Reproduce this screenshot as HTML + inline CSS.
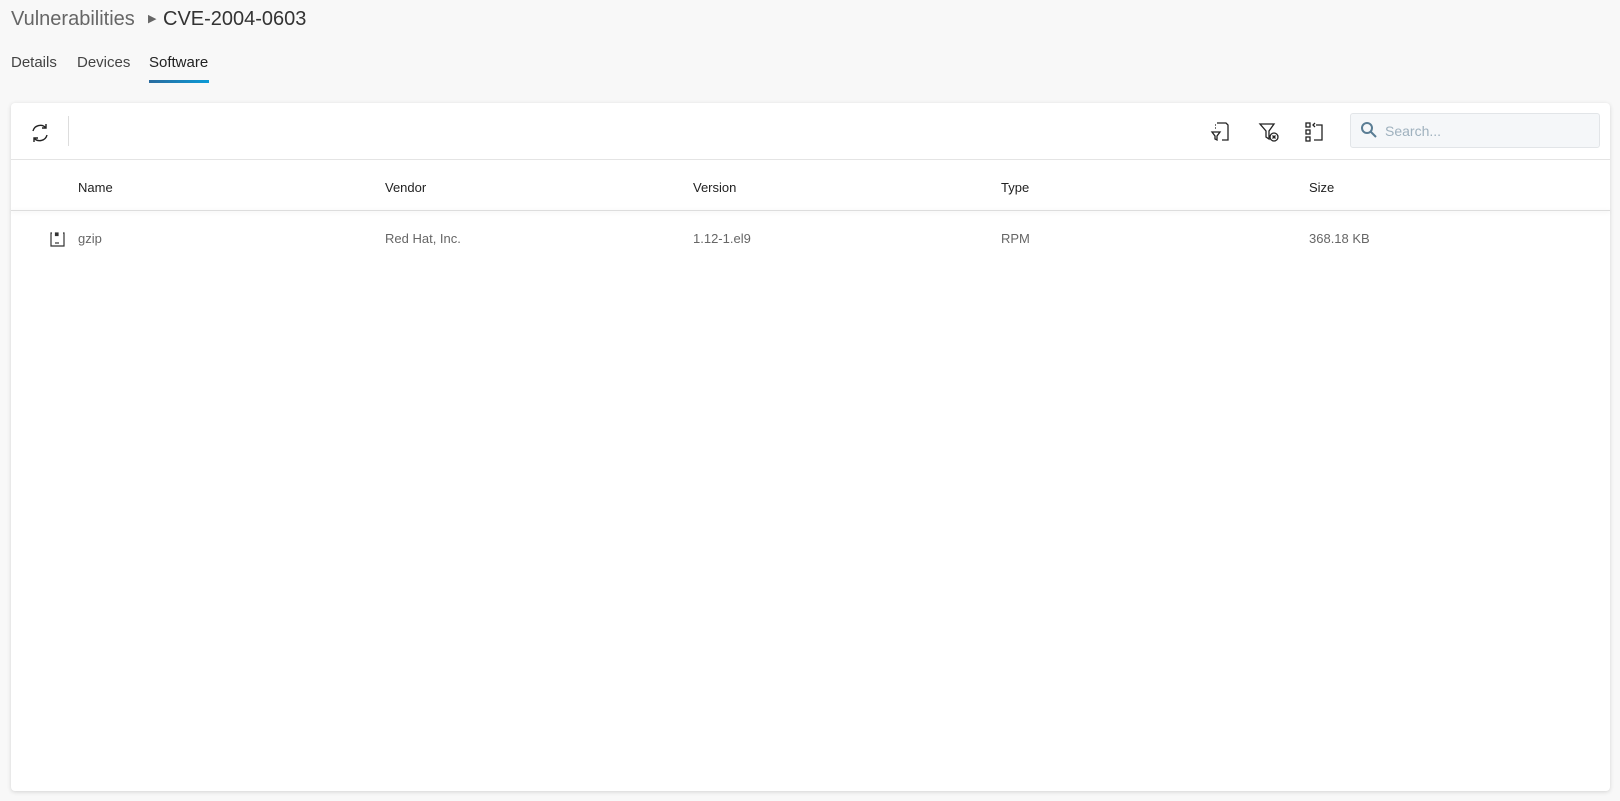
<!DOCTYPE html><html><head><style>
body{margin:0;width:1620px;height:801px;background:#f8f8f8;font-family:"Liberation Sans",sans-serif;position:relative;overflow:hidden;color:#333}
.a{position:absolute;white-space:nowrap}
.card{position:absolute;left:11px;top:103px;width:1599px;height:688px;background:#fff;border-radius:4px;box-shadow:0 1px 4px rgba(0,0,0,.15)}
.th{font-size:13px;color:#222;top:180px}
.td{font-size:13px;color:#666;top:231px}
</style></head><body>
<div class="a" style="left:11px;top:8px;font-size:20px;color:#666">Vulnerabilities</div>
<div class="a" style="left:148px;top:12px;font-size:11px;color:#666">▶</div>
<div class="a" style="left:163px;top:8px;font-size:20px;color:#333">CVE-2004-0603</div>
<div class="a" style="left:11px;top:54px;font-size:15px;color:#444">Details</div>
<div class="a" style="left:77px;top:54px;font-size:15px;color:#444">Devices</div>
<div class="a" style="left:149px;top:54px;font-size:15px;color:#222">Software</div>
<div class="a" style="left:149px;top:80px;width:60px;height:3px;background:linear-gradient(90deg,#2a6c9f,#0b9ad6)"></div>
<div class="card"></div>
<svg class="a" style="left:28px;top:121px" width="24" height="24" viewBox="0 0 24 24" fill="none" stroke="#222" stroke-width="1.4"><path d="M5 10a7.5 7.5 0 0 1 13-3M19 14a7.5 7.5 0 0 1-13 3"/><path d="M18 3v4h-4M6 21v-4h4"/></svg>
<div class="a" style="left:68px;top:116px;width:1px;height:30px;background:#ddd"></div>
<div class="a" style="left:11px;top:159px;width:1599px;height:1px;background:#e4e4e4"></div>
<div class="a" style="left:11px;top:210px;width:1599px;height:1px;background:#ddd;box-shadow:0 1px 4px rgba(0,0,0,.12)"></div>
<svg class="a" style="left:1208px;top:120px" width="24" height="24" viewBox="0 0 24 24" fill="none" stroke="#222" stroke-width="1.3"><path d="M9 3h9l2 2v15h-6M4 12h8l-3 4v4l-2-1v-3z" /><path d="M7 5h1M7 8h1" stroke-dasharray="1 2"/></svg>
<svg class="a" style="left:1257px;top:120px" width="24" height="24" viewBox="0 0 24 24" fill="none" stroke="#222" stroke-width="1.3"><path d="M3 4h14l-5 7v8l-3-2v-6z"/><circle cx="17" cy="17" r="4"/><path d="M15.5 15.5l3 3M18.5 15.5l-3 3"/></svg>
<svg class="a" style="left:1302px;top:120px" width="24" height="24" viewBox="0 0 24 24" fill="none" stroke="#222" stroke-width="1.3"><rect x="4" y="3" width="4" height="4"/><rect x="4" y="10" width="4" height="4"/><rect x="4" y="17" width="4" height="4"/><path d="M14 5h6v15h-8M13 3l-2 2 2 2"/></svg>
<div class="a" style="left:1350px;top:113px;width:250px;height:35px;background:#f5f7f9;border:1px solid #e2e5e8;border-radius:3px;box-sizing:border-box"></div>
<svg class="a" style="left:1360px;top:121px" width="18" height="18" viewBox="0 0 18 18" fill="none" stroke="#5a7d94" stroke-width="2"><circle cx="7" cy="7" r="5"/><path d="M11 11l5 5"/></svg>
<div class="a" style="left:1385px;top:123px;font-size:14px;color:#9fb1be">Search...</div>
<div class="a th" style="left:78px">Name</div>
<div class="a th" style="left:385px">Vendor</div>
<div class="a th" style="left:693px">Version</div>
<div class="a th" style="left:1001px">Type</div>
<div class="a th" style="left:1309px">Size</div>
<svg class="a" style="left:49px;top:231px" width="17" height="17" viewBox="0 0 17 17" fill="none" stroke="#333" stroke-width="1.2"><path d="M3 2h-1v13h13v-13h-1"/><rect x="6.5" y="2" width="2.5" height="2.5" fill="#333"/><path d="M7 13v-2M9 13v-2"/></svg>
<div class="a td" style="left:78px">gzip</div>
<div class="a td" style="left:385px">Red Hat, Inc.</div>
<div class="a td" style="left:693px">1.12-1.el9</div>
<div class="a td" style="left:1001px">RPM</div>
<div class="a td" style="left:1309px">368.18 KB</div>
</body></html>
